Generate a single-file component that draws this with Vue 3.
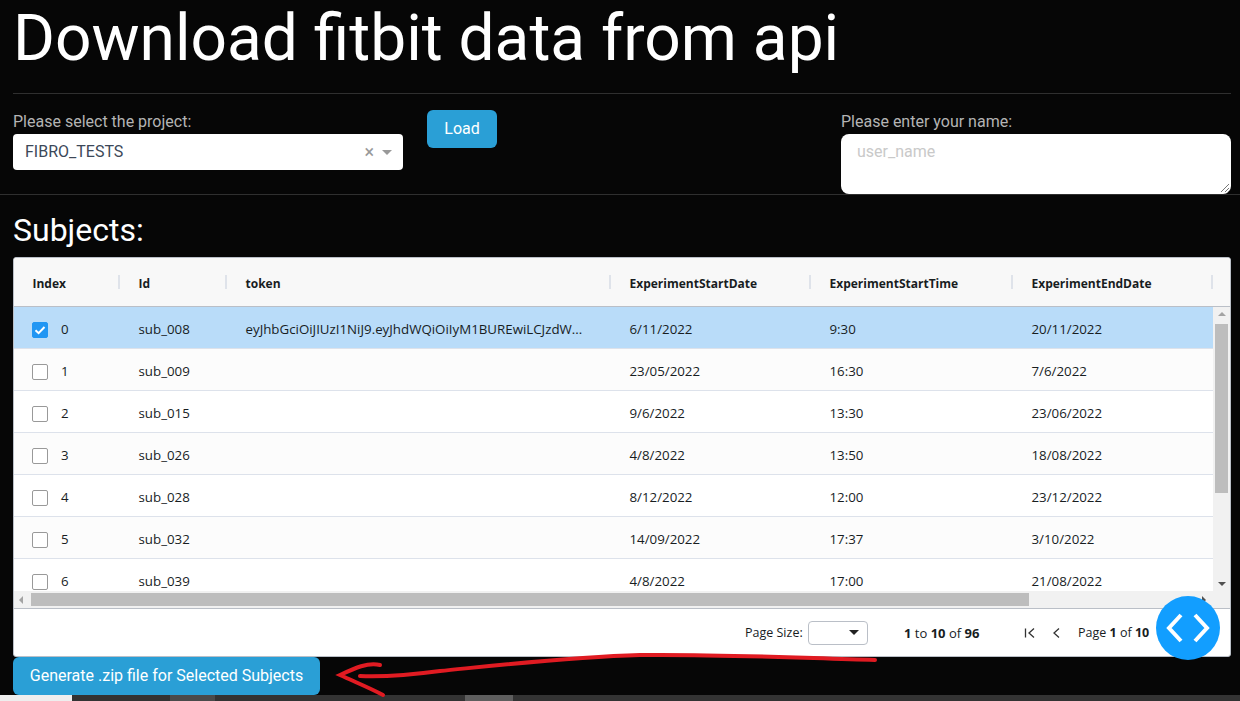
<script setup>
const columns = ['Index', 'Id', 'token', 'ExperimentStartDate', 'ExperimentStartTime', 'ExperimentEndDate']
const rows = [
  { i: 0, id: 'sub_008', token: 'eyJhbGciOiJIUzI1NiJ9.eyJhdWQiOiIyM1BUREwiLCJzdW...', sd: '6/11/2022', st: '9:30', ed: '20/11/2022', sel: true },
  { i: 1, id: 'sub_009', token: '', sd: '23/05/2022', st: '16:30', ed: '7/6/2022' },
  { i: 2, id: 'sub_015', token: '', sd: '9/6/2022', st: '13:30', ed: '23/06/2022' },
  { i: 3, id: 'sub_026', token: '', sd: '4/8/2022', st: '13:50', ed: '18/08/2022' },
  { i: 4, id: 'sub_028', token: '', sd: '8/12/2022', st: '12:00', ed: '23/12/2022' },
  { i: 5, id: 'sub_032', token: '', sd: '14/09/2022', st: '17:37', ed: '3/10/2022' },
  { i: 6, id: 'sub_039', token: '', sd: '4/8/2022', st: '17:00', ed: '21/08/2022' }
]
</script>

<template>
  <div class="page">
    <h1 class="title">Download fitbit data from api</h1>
    <hr class="rule inset" />
    <section class="controls">
      <div class="field">
        <label class="label">Please select the project:</label>
        <div class="select">
          <span class="select-value">FIBRO_TESTS</span>
          <span class="clear">×</span>
          <span class="caret"></span>
        </div>
      </div>
      <button class="btn load">Load</button>
      <div class="field name">
        <label class="label">Please enter your name:</label>
        <div class="textarea">
          <span class="placeholder">user_name</span>
          <svg class="grip" width="10" height="10" viewBox="0 0 10 10"><path d="M1 9 9 1M5 9 9 5M8 9l1-1" stroke="#777" fill="none" /></svg>
        </div>
      </div>
    </section>
    <hr class="rule" />
    <h2 class="subtitle">Subjects:</h2>
    <div class="grid">
      <div class="grid-head">
        <div v-for="c in columns" :key="c" class="hcell">{{ c }}</div>
      </div>
      <div class="grid-main">
        <div class="grid-body">
          <div v-for="r in rows" :key="r.i" class="row" :class="{ selected: r.sel }">
            <div class="cell first">
              <span class="check" :class="{ on: r.sel }">
                <svg v-if="r.sel" width="12" height="12" viewBox="0 0 12 12"><path d="M1.5 6.2 4.6 9.2 10.5 3" stroke="#fff" stroke-width="2" fill="none" /></svg>
              </span>
              <span>{{ r.i }}</span>
            </div>
            <div class="cell">{{ r.id }}</div>
            <div class="cell tok">{{ r.token }}</div>
            <div class="cell">{{ r.sd }}</div>
            <div class="cell">{{ r.st }}</div>
            <div class="cell">{{ r.ed }}</div>
          </div>
        </div>
        <div class="vbar">
          <span class="arrow-up"></span>
          <span class="vthumb"></span>
          <span class="arrow-down"></span>
        </div>
      </div>
      <div class="hbar">
        <span class="arrow-left"></span>
        <span class="hthumb"></span>
        <span class="arrow-right"></span>
      </div>
      <div class="pager">
        <span class="psize">Page Size:</span>
        <span class="pselect"><i class="pcaret"></i></span>
        <span class="count"><b>1</b> to <b>10</b> of <b>96</b></span>
        <svg class="nav first-nav" width="14" height="14" viewBox="0 0 14 14"><path d="M2.5 2.5v9M11 2.5 6 7l5 4.5" stroke="#333" stroke-width="1.3" fill="none" /></svg>
        <svg class="nav prev-nav" width="12" height="14" viewBox="0 0 12 14"><path d="M8 2.5 3 7l5 4.5" stroke="#333" stroke-width="1.3" fill="none" /></svg>
        <span class="pageno">Page <b>1</b> of <b>10</b></span>
      </div>
    </div>
    <button class="btn generate">Generate .zip file for Selected Subjects</button>
    <div class="taskbar">
      <span class="t1"></span><span class="t2"></span><span class="t3"></span><span class="t4"></span><span class="t5"></span><span class="t6"></span>
    </div>
    <svg class="scribble" width="1240" height="701" viewBox="0 0 1240 701">
      <path d="M875 660C800 658 720 654 640 655C570 657 500 665 440 671C410 675 385 677 360 676" stroke="#e01b22" stroke-width="4" fill="none" stroke-linecap="round" />
      <path d="M380 665C368 662 355 668 340 675C355 682 370 688 383 695" stroke="#e01b22" stroke-width="4" fill="none" stroke-linecap="round" />
    </svg>
    <div class="fab">
      <svg width="44" height="32" viewBox="0 0 44 32"><path d="M15 3 3 16l12 13M29 3l12 13-12 13" stroke="#fff" stroke-width="4" fill="none" /></svg>
    </div>
  </div>
</template>

<style>
html, body { margin: 0; background: #060606; }
</style>

<style scoped>
.page {
  position: relative;
  width: 1240px;
  height: 701px;
  overflow: hidden;
  background: #060606;
  font-family: Roboto, sans-serif;
  display: flex;
  flex-direction: column;
}
.title {
  margin: 0;
  height: 93px;
  padding-left: 13px;
  font-size: 64px;
  line-height: 78px;
  font-weight: 400;
  color: #fff;
  box-sizing: border-box;
}
.rule { margin: 0; border: 0; height: 1px; background: #2f2f2f; flex: none; }
.rule.inset { margin: 0 9px 0 13px; }
.controls {
  height: 100px;
  padding-left: 13px;
  display: flex;
  align-items: flex-start;
  flex: none;
}
.field { width: 390px; padding-top: 18px; }
.field.name { margin-left: 344px; }
.label { display: block; height: 22px; font-size: 16px; line-height: 19px; color: #b4b4b4; }
.select {
  height: 36px;
  background: #fff;
  border-radius: 4px;
  display: flex;
  align-items: center;
  padding: 0 11px 2px 12px;
  box-sizing: border-box;
  color: #3c4858;
  font-size: 16px;
}
.select-value { flex: 1; }
.clear { color: #999; font-size: 18px; margin-right: 8px; }
.caret { width: 0; height: 0; border: 5px solid transparent; border-top: 5px solid #999; border-bottom: 0; margin-top: 2px; }
.btn {
  border: 0;
  border-radius: 6px;
  background: #2a9fd6;
  color: #fff;
  font-family: Roboto, sans-serif;
  font-size: 16px;
  padding: 0 0 2px;
  flex: none;
}
.load { width: 70px; height: 38px; margin: 16px 0 0 24px; }
.textarea {
  position: relative;
  height: 60px;
  background: #fff;
  border-radius: 8px;
  padding: 8px 16px;
  box-sizing: border-box;
  font-size: 16px;
  line-height: 19px;
}
.placeholder { color: #c9c9c9; }
.grip { position: absolute; right: 1px; bottom: 1px; }
.subtitle {
  margin: 0;
  height: 62px;
  padding: 17px 0 0 13px;
  box-sizing: border-box;
  font-size: 32px;
  line-height: 36px;
  font-weight: 400;
  color: #fff;
  flex: none;
}
.grid {
  margin-left: 13px;
  width: 1218px;
  height: 400px;
  box-sizing: border-box;
  border: 1px solid #babfc7;
  border-radius: 3px;
  background: #fff;
  font-family: "Open Sans", sans-serif;
  font-size: 13.3px;
  color: #181d1f;
  display: flex;
  flex-direction: column;
  overflow: hidden;
  flex: none;
}
.grid-head, .row {
  display: grid;
  grid-template-columns: 106px 107px 384px 200px 202px 200px;
}
.grid-head {
  height: 49px;
  background: #f8f8f8;
  border-bottom: 1px solid #babfc7;
  box-sizing: border-box;
  flex: none;
}
.hcell {
  position: relative;
  height: 48px;
  padding-left: 18.5px;
  line-height: 52px;
  font-weight: 700;
  font-size: 12px;
}
.hcell::after {
  content: "";
  position: absolute;
  right: 0;
  top: 17px;
  width: 2px;
  height: 14px;
  background: #dfe3ea;
}
.grid-main { display: flex; height: 284px; flex: none; }
.grid-body { flex: 1; overflow: hidden; }
.row {
  height: 42px;
  box-sizing: border-box;
  border-bottom: 1px solid #dde2eb;
  background: #fff;
}
.row:nth-child(even) { background: #fcfcfc; }
.row.selected { background: #b9dcf9; }
.cell {
  height: 41px;
  box-sizing: border-box;
  padding-left: 18.5px;
  line-height: 45px;
  white-space: nowrap;
  overflow: hidden;
  text-overflow: ellipsis;
  padding-right: 18px;
}
.cell.first { display: flex; align-items: center; gap: 13px; padding-top: 4px; padding-left: 18px; line-height: 37px; }
.check {
  width: 16px;
  height: 16px;
  border: 1.5px solid #999;
  border-radius: 2px;
  background: #fff;
  display: flex;
  align-items: center;
  justify-content: center;
  box-sizing: border-box;
  flex: none;
}
.check.on { background: #2196f3; border-color: #2196f3; }
.vbar {
  width: 17px;
  background: #f1f1f1;
  flex: none;
  display: flex;
  flex-direction: column;
  align-items: center;
}
.vthumb { width: 13px; height: 169px; background: #bdbdbd; margin-top: 8px; }
.arrow-up { margin-top: 5px; border: 4px solid transparent; border-bottom: 4px solid #a3a3a3; border-top: 0; }
.arrow-down { margin-top: auto; margin-bottom: 5px; border: 4px solid transparent; border-top: 4px solid #505050; border-bottom: 0; }
.hbar {
  height: 17px;
  background: #f1f1f1;
  border-bottom: 1px solid #babfc7;
  box-sizing: content-box;
  display: flex;
  align-items: center;
  flex: none;
}
.arrow-left { margin-left: 5px; border: 4px solid transparent; border-right: 4px solid #a3a3a3; border-left: 0; }
.hthumb { width: 998px; height: 13px; background: #bdbdbd; margin-left: 8px; }
.arrow-right { margin-left: 173px; border: 4px solid transparent; border-left: 4px solid #505050; border-right: 0; }
.pager {
  flex: 1;
  display: flex;
  align-items: center;
  font-size: 12.5px;
  color: #181d1f;
  padding-left: 731px;
}
.psize { width: 63px; font-size: 12.5px; }
.pselect {
  width: 60px;
  height: 24px;
  box-sizing: border-box;
  border: 1px solid #babfc7;
  border-radius: 4px;
  position: relative;
}
.pcaret {
  position: absolute;
  right: 8px;
  top: 8px;
  border: 5px solid transparent;
  border-top: 5px solid #222;
  border-bottom: 0;
}
.count { margin-left: 36px; width: 76px; white-space: nowrap; font-size: 13px; }
.first-nav { margin-left: 43px; }
.prev-nav { margin-left: 14px; }
.pageno { margin-left: 15px; white-space: nowrap; }
.generate { width: 307px; height: 38px; margin-left: 13px; flex: none; }
.taskbar { height: 6px; display: flex; background: #333; flex: none; }
.taskbar span { display: block; height: 6px; }
.t1 { width: 72px; background: #eee; }
.t2 { width: 98px; background: #333; }
.t3 { width: 45px; background: #4a4a4a; }
.t4 { width: 250px; background: #333; }
.t5 { width: 48px; background: #5e5e5e; }
.scribble { position: absolute; left: 0; top: 0; pointer-events: none; }
.fab {
  position: absolute;
  left: 1156px;
  top: 596px;
  width: 64px;
  height: 64px;
  border-radius: 50%;
  background: #129eff;
  display: flex;
  align-items: center;
  justify-content: center;
}
</style>
